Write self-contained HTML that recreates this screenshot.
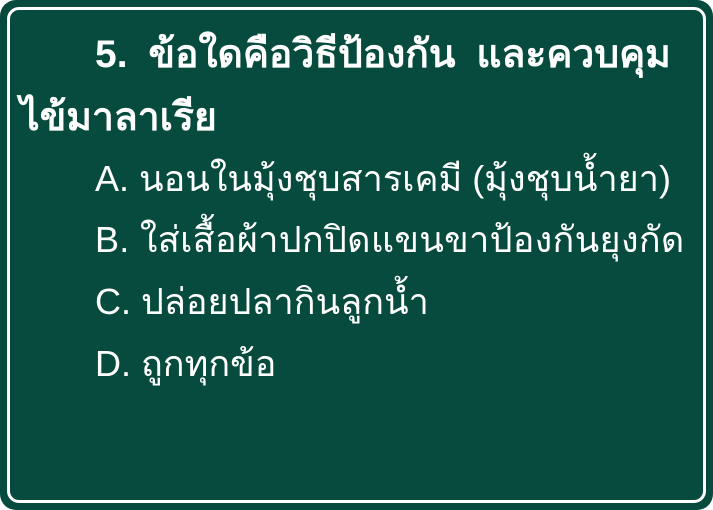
<!DOCTYPE html>
<html><head><meta charset="utf-8"><style>
html,body{margin:0;padding:0;width:713px;height:510px;overflow:hidden;background:#fff}
.outer{position:absolute;left:0;top:0;width:713px;height:510px;background:#064b3d;border-radius:16px}
.inner{position:absolute;left:7px;top:7px;width:693px;height:490px;border:3px solid #fff;border-radius:12px}
.t{position:absolute;color:#fff;font-family:"Liberation Sans","DejaVu Sans",sans-serif;font-size:36px;white-space:nowrap;line-height:1}
.b{font-weight:bold;font-size:39px}
</style></head><body>
<div class="outer"></div><div class="inner"></div>
<div class="t b" style="left:95px;top:35px;word-spacing:10px">5. ข้อใดคือวิธีป้องกัน และควบคุม</div>
<div class="t b" style="left:20px;top:98px">ไข้มาลาเรีย</div>
<div class="t" style="left:95px;top:161px">A. นอนในมุ้งชุบสารเคมี (มุ้งชุบน้ำยา)</div>
<div class="t" style="left:95px;top:222px;letter-spacing:0.3px">B. ใส่เสื้อผ้าปกปิดแขนขาป้องกันยุงกัด</div>
<div class="t" style="left:95px;top:284px">C. ปล่อยปลากินลูกน้ำ</div>
<div class="t" style="left:95px;top:346px">D. ถูกทุกข้อ</div>
</body></html>
